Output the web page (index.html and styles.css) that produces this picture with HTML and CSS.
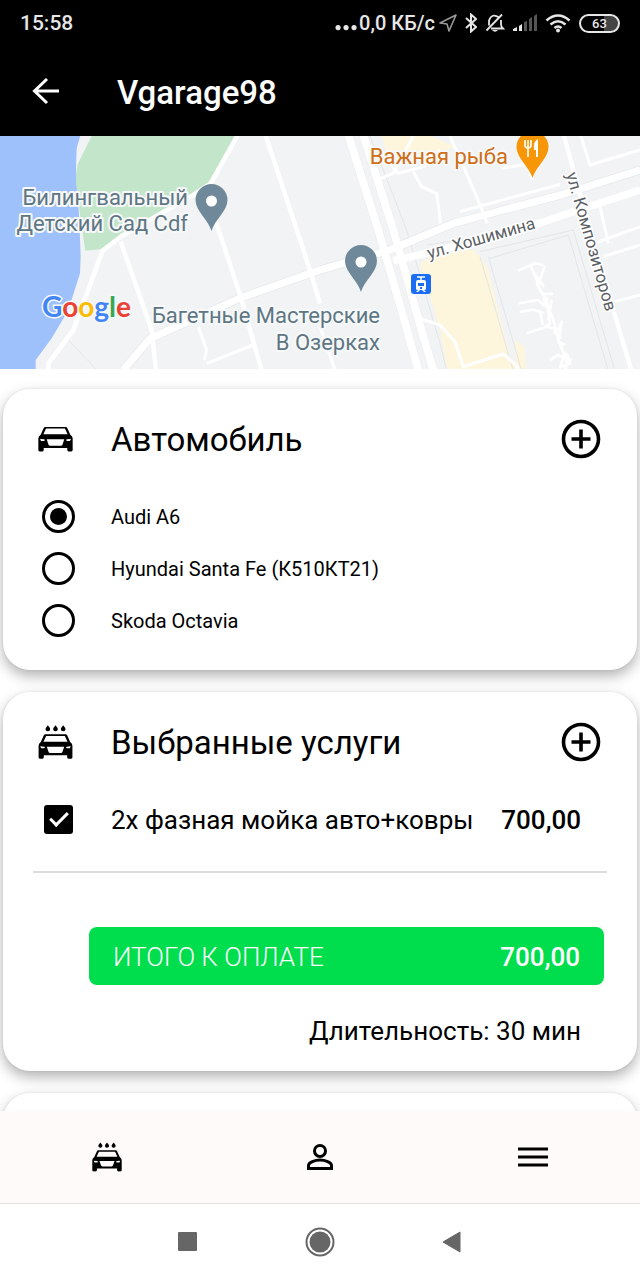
FILE: index.html
```html
<!DOCTYPE html>
<html lang="ru">
<head>
  <meta charset="UTF-8">
  <meta name="viewport" content="width=device-width, initial-scale=1">
  <title>Vgarage98</title>
  <link rel="stylesheet" href="styles.css">
</head>
<body>

  <!-- Shared icon shapes -->
  <svg class="symbols" width="0" height="0" aria-hidden="true">
    <symbol id="car" viewBox="0 0 104 76">
      <path fill-rule="evenodd" d="M22 2h60q4 0 5 3l9 20q7 5 7 11v35q0 4-4 4h-8q-4 0-4-4v-6H17v6q0 4-4 4H5q-4 0-4-4V36q0-6 7-11L17 5q1-3 5-3z M24 7L16 24h72l-8-17z M26 39h52l-5 15q-1 4-5 4H36q-4 0-5-4z M6 38l13 1q2 2 0 5l-10 0z M98 38l-13 1q-2 2 0 5l10 0z"/>
    </symbol>
    <symbol id="car-wash" viewBox="0 0 104 102">
      <use href="#car" x="0" y="26" width="104" height="76"/>
      <path d="M29 1q7 8 7 12a7 6 0 0 1-14 0q0-4 7-12z M52 1q7 8 7 12a7 6 0 0 1-14 0q0-4 7-12z M75 1q7 8 7 12a7 6 0 0 1-14 0q0-4 7-12z"/>
    </symbol>
    <symbol id="plus" viewBox="0 0 40 40">
      <path d="M20 2.500a17.500 17.500 0 1 0 0 35a17.500 17.500 0 1 0 0-35z M20 10.500v19M10.500 20h19" fill="none" stroke="#000" stroke-width="3.600"/>
    </symbol>
  </svg>

  <header class="top">
    <div class="status">
      <time class="clock">15:58</time>
      <div class="status-icons">
        <span class="speed"><svg width="22" height="18" viewBox="0 0 22 18"><path d="M3 11a2.600 2.600 0 1 0 .1 0zM11 11a2.600 2.600 0 1 0 .1 0zM19 11a2.600 2.600 0 1 0 .1 0z" fill="#e6e6e6"/></svg>0,0 КБ/с</span>
        <svg width="18" height="20" viewBox="0 0 18 20"><path d="M17 2L10 18 8 11 1 10z" fill="none" stroke="#999" stroke-width="1.600" stroke-linejoin="round"/></svg>
        <svg width="12" height="20" viewBox="0 0 12 20"><path d="M1 5l10 9-5 4.500V1.500L11 6 1 15" fill="none" stroke="#e6e6e6" stroke-width="2"/></svg>
        <svg width="20" height="20" viewBox="0 0 20 20"><path d="M17 1.500L1.500 17.500M14 4.500q-7-5-10 3v5M6 15.500h12q-2-2-2-4V7" fill="none" stroke="#e6e6e6" stroke-width="1.800"/><path d="M7 17h6q-3 3.500-6 0z" fill="#e6e6e6"/></svg>
        <svg width="24" height="18" viewBox="0 0 24 18"><path d="M0 17v-2l4-2v4zM6 17v-5l3-2v7z" fill="#e6e6e6"/><path d="M11 17V8l3-1v10zM16 17V5l3-2v14zM21 17V2l3-2v17z" fill="#555"/></svg>
        <svg width="26" height="20" viewBox="0 0 26 20"><path d="M1.500 7.500q11.500-10 23 0M5.500 11.500q7.500-6.500 15 0M9.500 15q3.500-3 7 0" fill="none" stroke="#e6e6e6" stroke-width="2.600"/><circle cx="13" cy="17.500" r="2" fill="#e6e6e6"/></svg>
        <span class="battery">63</span>
      </div>
    </div>
    <div class="app-bar">
      <button class="back" type="button" aria-label="Назад">
        <svg width="28" height="28" viewBox="0 0 28 28"><path d="M27 14H3M15 2L2.500 14 15 26" fill="none" stroke="#fff" stroke-width="3"/></svg>
      </button>
      <h1>Vgarage98</h1>
    </div>
  </header>

  <main>
    <svg class="map" viewBox="0 0 640 233" preserveAspectRatio="xMidYMid slice" role="img" aria-label="Карта">
      <g transform="translate(0 -6) scale(.33333)" fill="none" stroke-linejoin="round">
        <path d="M0 0H1920V740H0z" fill="#f1f3f4"/>
        <path d="M0 0H246L230 55 228 110 238 270 242 380 240 430 205 540 155 625 107 690V740H0z" fill="#9fc1fb"/>
        <path d="M284 0H716L632 160 580 195 365 318 310 356 256 362 242 270 228 160 232 105z" fill="#c3e6cb"/>
        <path d="M1145 18H1290L1370 50 1240 85 1160 70zM1400 360H1420Q1450 385 1465 420L1500 560 1530 680 1560 740H1345L1320 600 1260 400 1300 375z" fill="#fdf5dc"/>
        <path d="M1545 630l28 20 5 80h-30z" fill="#fdf5dc"/>
        <!-- thin outlines under the roads -->
        <g stroke="#e3e5e8" stroke-width="3">
          <path d="M1110 18L1220 300 1320 640 1345 740M205 630L310 740M1440 380L1545 740M1465 380L1570 740M1440 365L1720 300 1850 740M1470 385L1705 315 1830 740M1280 345L1440 320"/>
        </g>
        <g stroke="#e5e7ea" stroke-width="26">
          <path d="M1040 0L1135 300 1210 560 1260 740M1085 0L1180 300 1270 620 1306 740"/>
          <path d="M370 720L450 626 720 504 960 420 1170 360 1360 280 1700 190 1920 120"/>
        </g>
        <g stroke="#fff">
          <path d="M1040 0L1135 300 1210 560 1260 740M1085 0L1180 300 1270 620 1306 740" stroke-width="24"/>
          <path d="M370 720L450 626 720 504 960 420 1170 360 1360 280 1700 190 1920 120M1180 392L1500 320 1700 252 1920 180" stroke-width="22"/>
          <path d="M716 10L632 160 580 195 365 318 308 362 220 600 145 700V740" stroke-width="14"/>
          <path d="M362 335L455 600 470 740M636 240L722 500 790 740M795 10L930 420 960 520M1690 10L1780 340 1900 740" stroke-width="13"/>
          <path d="M595 590l25 70-7 30M620 700l140-55M960 590l52 150M1130 150L1180 130 1240 18M1150 80l45 50 75-20 50-50M1240 125l25 45 45 20 12 90M1350 18L1430 200 1462 280M1380 245l300-82M1505 115l90-15M1590 130l8 20M1740 10l30 95 150-45M1800 230l25 110M1770 345l150-55M1810 380l110-35M1845 515l75-20M1260 565l60 20 45 50 25 75 120-38 40 35 15 40" stroke-width="9"/>
          <path d="M1555 422l50-22 25 5M1590 402l25 60 20-55M1602 430l30 40M1610 460l25 45 25 65 15 60 25 60-5 50M1625 492h35M1630 505l20 50M1555 520l60-10 20 20M1560 546l40-7 30 10M1640 500l10 80-15 10M1655 510l-10 60M1620 540l8 45M1580 610l60-20 35 10 10-25-10 60 20 10M1660 605l25 20M1650 690l25-15 20 10 20 5M1695 665l-15 50M1700 670l10 30-25 10" stroke-width="8"/>
        </g>
      </g>
      <g fill="#70899a">
        <path d="M211.500 48a16 16 0 0 1 16 16c0 11-13 20-16 31-3-11-16-20-16-31a16 16 0 0 1 16-16z"/>
        <path d="M361 109a16 16 0 0 1 16 16c0 11-13 20-16 31-3-11-16-20-16-31a16 16 0 0 1 16-16z"/>
      </g>
      <circle cx="211.500" cy="65" r="5.500" fill="#fff"/>
      <circle cx="361" cy="126" r="5.500" fill="#fff"/>
      <path d="M532.500-5a16 16 0 0 1 16 16c0 11-13 20-16 31-3-11-16-20-16-31a16 16 0 0 1 16-16z" fill="#f79708"/>
      <path d="M525 4v5q0 3 3 3t3-3V4M528 4v17" fill="none" stroke="#fff" stroke-width="1.600"/>
      <path d="M538 3v18h-2v-7h-2q-1-9 4-11z" fill="#fff"/>
      <rect x="411" y="138" width="20" height="20" rx="3" fill="#1b6ef3"/>
      <path d="M417 141h8M421 141v4" stroke="#fff" stroke-width="1.500"/>
      <path fill-rule="evenodd" d="M418 144h6q2 0 2 2v7q0 1-2 1l2 2h-2l-2-2h-2l-2 2h-2l2-2q-2 0-2-1v-7q0-2 2-2zM418 147v3h6v-3zM420 151v2h2v-2z" fill="#fff"/>

      <g class="place">
        <text x="188" y="69" text-anchor="end">Билингвальный</text>
        <text x="188" y="95" text-anchor="end">Детский Сад Cdf</text>
        <text x="380" y="187" text-anchor="end">Багетные Мастерские</text>
        <text x="380" y="214" text-anchor="end">В Озерках</text>
        <text class="food" x="508" y="28" text-anchor="end">Важная рыба</text>
      </g>
      <text class="street" transform="translate(429 123) rotate(-16)">ул. Хошимина</text>
      <text class="street" transform="translate(566 38) rotate(74)">ул. Композиторов</text>
      <text class="google" x="42" y="181"><tspan fill="#4285f4">G</tspan><tspan fill="#ea4335">o</tspan><tspan fill="#fbbc05">o</tspan><tspan fill="#4285f4">g</tspan><tspan fill="#34a853">l</tspan><tspan fill="#ea4335">e</tspan></text>
    </svg>

    <div class="cards">
      <section class="card">
        <div class="card-head">
          <svg class="head-icon" width="35" height="26"><use href="#car"/></svg>
          <h2>Автомобиль</h2>
          <button class="add" type="button" aria-label="Добавить автомобиль"><svg width="40" height="40"><use href="#plus"/></svg></button>
        </div>
        <label class="row"><input type="radio" name="car" checked><span>Audi A6</span></label>
        <label class="row"><input type="radio" name="car"><span>Hyundai Santa Fe (К510КТ21)</span></label>
        <label class="row"><input type="radio" name="car"><span>Skoda Octavia</span></label>
      </section>

      <section class="card">
        <div class="card-head">
          <svg class="head-icon" width="35" height="34"><use href="#car-wash"/></svg>
          <h2>Выбранные услуги</h2>
          <button class="add" type="button" aria-label="Добавить услугу"><svg width="40" height="40"><use href="#plus"/></svg></button>
        </div>
        <label class="row service">
          <input type="checkbox" checked>
          <span>2х фазная мойка авто+ковры</span>
          <strong>700,00</strong>
        </label>
        <hr>
        <div class="total"><span>ИТОГО К ОПЛАТЕ</span><strong>700,00</strong></div>
        <p class="duration">Длительность: 30 мин</p>
      </section>

      <section class="card next"></section>
    </div>
  </main>

  <nav class="tabs">
    <a href="#wash" aria-label="Мойка"><svg width="30" height="30"><use href="#car-wash"/></svg></a>
    <a href="#profile" aria-label="Профиль"><svg width="30" height="30" viewBox="0 0 30 30"><path d="M15 3.500a5.500 5.500 0 1 0 0 11a5.500 5.500 0 1 0 0-11zM3.500 26.500v-3c0-3 6.500-5.500 11.500-5.500s11.500 2.500 11.500 5.500v3z" fill="none" stroke="#000" stroke-width="3"/></svg></a>
    <a href="#menu" aria-label="Меню"><svg width="30" height="30" viewBox="0 0 30 30"><path d="M0 7h30M0 15h30M0 23h30" stroke="#000" stroke-width="3"/></svg></a>
  </nav>

  <div class="system-nav">
    <button type="button" aria-label="Недавние"><svg width="20" height="20"><rect width="19" height="19" rx="1" fill="#666"/></svg></button>
    <button type="button" aria-label="Домой"><svg width="30" height="30" viewBox="0 0 30 30"><circle cx="15" cy="15" r="13.500" fill="none" stroke="#666" stroke-width="2"/><circle cx="15" cy="15" r="10.500" fill="#666"/></svg></button>
    <button type="button" aria-label="Назад"><svg width="20" height="22" viewBox="0 0 20 22"><path d="M18 1v20L1 11z" fill="#666" stroke="#666" stroke-linejoin="round"/></svg></button>
  </div>

</body>
</html>
```
FILE: styles.css
```css
* {
  box-sizing: border-box;
}

body {
  margin: 0;
  height: 100vh;
  display: flex;
  flex-direction: column;
  font-family: Roboto, "Noto Sans", sans-serif;
  color: #000;
  background: #fff;
}

h1, h2, p {
  margin: 0;
}

svg {
  display: block;
}

button {
  padding: 0;
  border: none;
  background: none;
  cursor: pointer;
}

.symbols {
  position: absolute;
}

/* Header */
.top {
  flex: none;
  background: #000;
  color: #fff;
}

.status {
  display: flex;
  justify-content: space-between;
  align-items: center;
  height: 46px;
  padding: 0 20px;
  color: #e6e6e6;
  font-weight: 500;
}

.clock {
  font-size: 21px;
}

.status-icons {
  display: flex;
  align-items: center;
  gap: 8px;
}

.speed {
  display: flex;
  align-items: center;
  gap: 2px;
  margin-right: -4px;
  font-size: 20px;
}

.battery {
  width: 41px;
  height: 19px;
  border: 2px solid #e6e6e6;
  border-radius: 10px;
  background: linear-gradient(to right, #000 63%, #444 63%);
  font-size: 13px;
  line-height: 15px;
  text-align: center;
}

.app-bar {
  display: flex;
  align-items: center;
  gap: 57px;
  height: 90px;
  padding: 0 32px;
}

h1 {
  padding-top: 2px;
  font-size: 33px;
  font-weight: 500;
}

/* Map */
main {
  flex: 1;
  min-height: 0;
  overflow-y: auto;
  scrollbar-width: none;
}

.map {
  width: 100%;
  height: 233px;
}

.place {
  font-size: 22px;
  fill: #5f7683;
  stroke: #f6f8f9;
  stroke-width: 4px;
  stroke-linejoin: round;
  paint-order: stroke;
}

.food {
  fill: #cf6f17;
}

.street {
  font-size: 17px;
  fill: #5c6065;
  stroke: #fff;
  stroke-width: 3px;
  paint-order: stroke;
}

.google {
  font-family: Lato, sans-serif;
  font-size: 28px;
  font-weight: 700;
  stroke: #f6f8f9;
  stroke-width: 3px;
  paint-order: stroke;
}

/* Cards */
.cards {
  display: flex;
  flex-direction: column;
  gap: 22px;
  padding: 20px 3px;
}

.card {
  padding: 14px 30px 24px;
  border-radius: 27px;
  background: #fff;
  box-shadow: 0 6px 14px rgba(0, 0, 0, 0.3), 0 0 3px rgba(0, 0, 0, 0.08);
}

.next {
  height: 200px;
}

.card-head {
  display: flex;
  align-items: center;
  height: 71px;
  margin-bottom: 16px;
  padding: 0 6px 0 5px;
}

.head-icon {
  margin-right: 38px;
}

h2 {
  flex: 1;
  padding-top: 2px;
  font-size: 33px;
  font-weight: 400;
}

.row {
  display: flex;
  align-items: center;
  gap: 36px;
  height: 52px;
  padding: 0 26px 0 9px;
  font-size: 20px;
}

.row span, .row strong {
  padding-top: 2px;
}

input {
  appearance: none;
  flex: none;
  display: grid;
  place-items: center;
  width: 33px;
  height: 33px;
  margin: 0;
}

input[type="radio"] {
  border: 3px solid #000;
  border-radius: 50%;
}

input[type="radio"]:checked::before {
  content: "";
  width: 17px;
  height: 17px;
  border-radius: 50%;
  background: #000;
}

input[type="checkbox"]::before {
  content: "";
  box-sizing: border-box;
  width: 29px;
  height: 29px;
  border: 3px solid #000;
  border-radius: 3px;
  grid-area: 1 / 1;
}

input[type="checkbox"]:checked::before {
  background: #000;
}

input[type="checkbox"]:checked::after {
  content: "";
  grid-area: 1 / 1;
  width: 7px;
  height: 15px;
  margin-bottom: 5px;
  border: solid #fff;
  border-width: 0 3px 3px 0;
  transform: rotate(45deg);
}

.service {
  font-size: 26px;
}

.service span {
  flex: 1;
  white-space: nowrap;
}

.service strong {
  margin-left: -36px;
}

strong {
  font-weight: 500;
}

hr {
  height: 2px;
  margin: 26px 0 54px;
  border: none;
  background: #dcdcdc;
}

.total {
  display: flex;
  justify-content: space-between;
  align-items: center;
  height: 58px;
  margin: 0 3px 0 56px;
  padding: 2px 24px 0;
  border-radius: 8px;
  background: #00de4e;
  color: #fff;
  font-size: 26px;
}

.total span {
  font-weight: 300;
}

.duration {
  margin-top: 30px;
  padding-right: 26px;
  font-size: 26px;
  line-height: 32px;
  text-align: right;
}

/* Bottom navigation */
.tabs {
  flex: none;
  position: relative;
  display: grid;
  grid-template-columns: repeat(3, 1fr);
  height: 93px;
  border-bottom: 1px solid #e4e2e2;
  background: #fefaf9;
}

.tabs a {
  display: grid;
  place-items: center;
  color: #000;
}

.system-nav {
  flex: none;
  display: flex;
  justify-content: center;
  height: 76px;
}

.system-nav button {
  display: grid;
  place-items: center;
  width: 132px;
}
```
